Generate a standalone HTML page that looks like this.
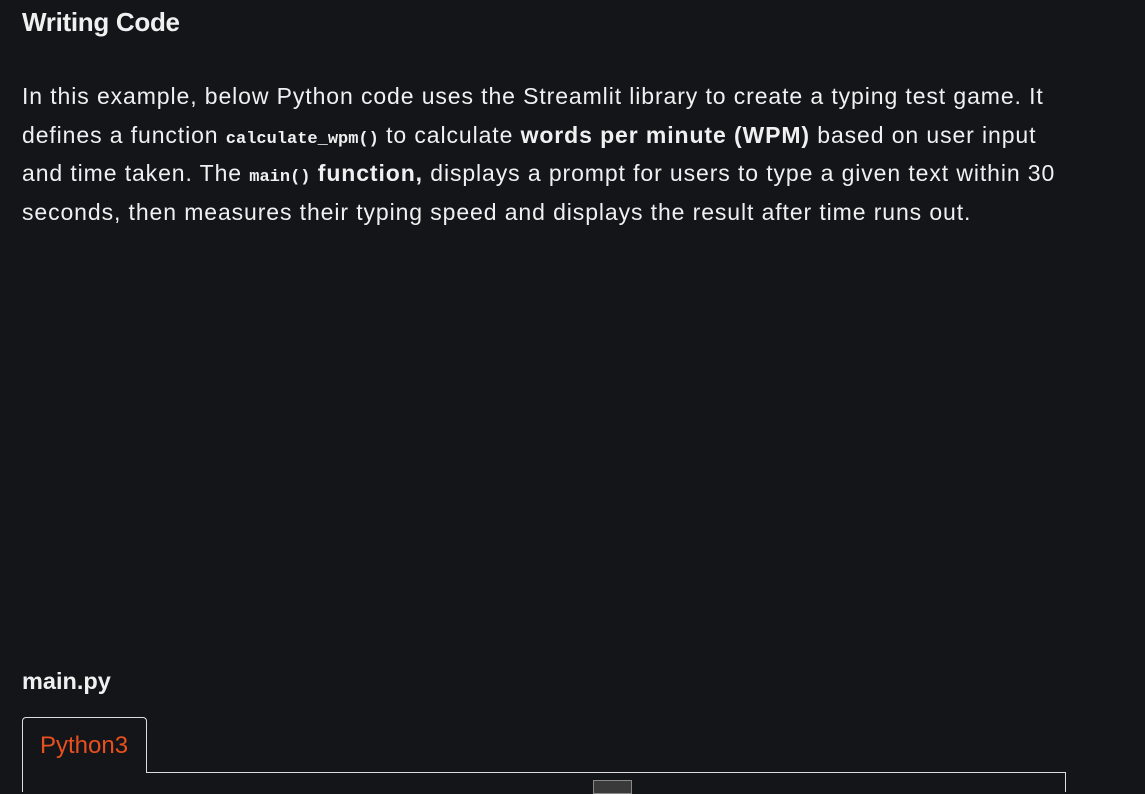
<!DOCTYPE html>
<html><head><style>
body{margin:0;width:1145px;height:792px;background:#141519;color:#f0f0f0;font-family:"Liberation Sans",sans-serif;overflow:hidden;position:relative}
.h{position:absolute;left:22px;top:7px;font-size:26px;font-weight:bold;letter-spacing:-0.3px}
.p{position:absolute;left:22px;top:77px;width:1120px;font-size:23px;line-height:38.5px;letter-spacing:0.9px;white-space:nowrap}
.p div{height:38.5px}
code{font-family:"Liberation Mono",monospace;font-size:17px;font-weight:bold;letter-spacing:0;line-height:0}
.m{position:absolute;left:22px;top:668px;font-size:23.5px;font-weight:bold}
.tab{position:absolute;left:22px;top:717px;width:125px;height:56px;border:1px solid #ddd;border-bottom:none;border-radius:4px 4px 0 0;box-sizing:border-box}
.tab span{position:absolute;left:17px;top:14px;color:#e8501e;font-size:24px}
.line{position:absolute;left:146px;top:772px;width:920px;height:1px;background:#ddd}
.r{position:absolute;left:1065px;top:772px;width:1px;height:20px;background:#ddd}
.l{position:absolute;left:22px;top:772px;width:1px;height:20px;background:#ddd}
.b{position:absolute;left:593px;top:780px;width:39px;height:14px;background:#3a3a3a;border:1px solid #888;box-sizing:border-box}
</style></head><body>
<div class="h">Writing Code</div>
<div class="p"><div>In this example, below Python code uses the Streamlit library to create a typing test game. It</div><div>defines a function <code>calculate_wpm()</code> to calculate <b>words per minute (WPM)</b> based on user input</div><div>and time taken. The <code>main()</code> <b>function,</b> displays a prompt for users to type a given text within 30</div><div>seconds, then measures their typing speed and displays the result after time runs out.</div></div>
<div class="m">main.py</div>
<div class="tab"><span>Python3</span></div>
<div class="line"></div><div class="r"></div><div class="l"></div><div class="b"></div>
</body></html>
